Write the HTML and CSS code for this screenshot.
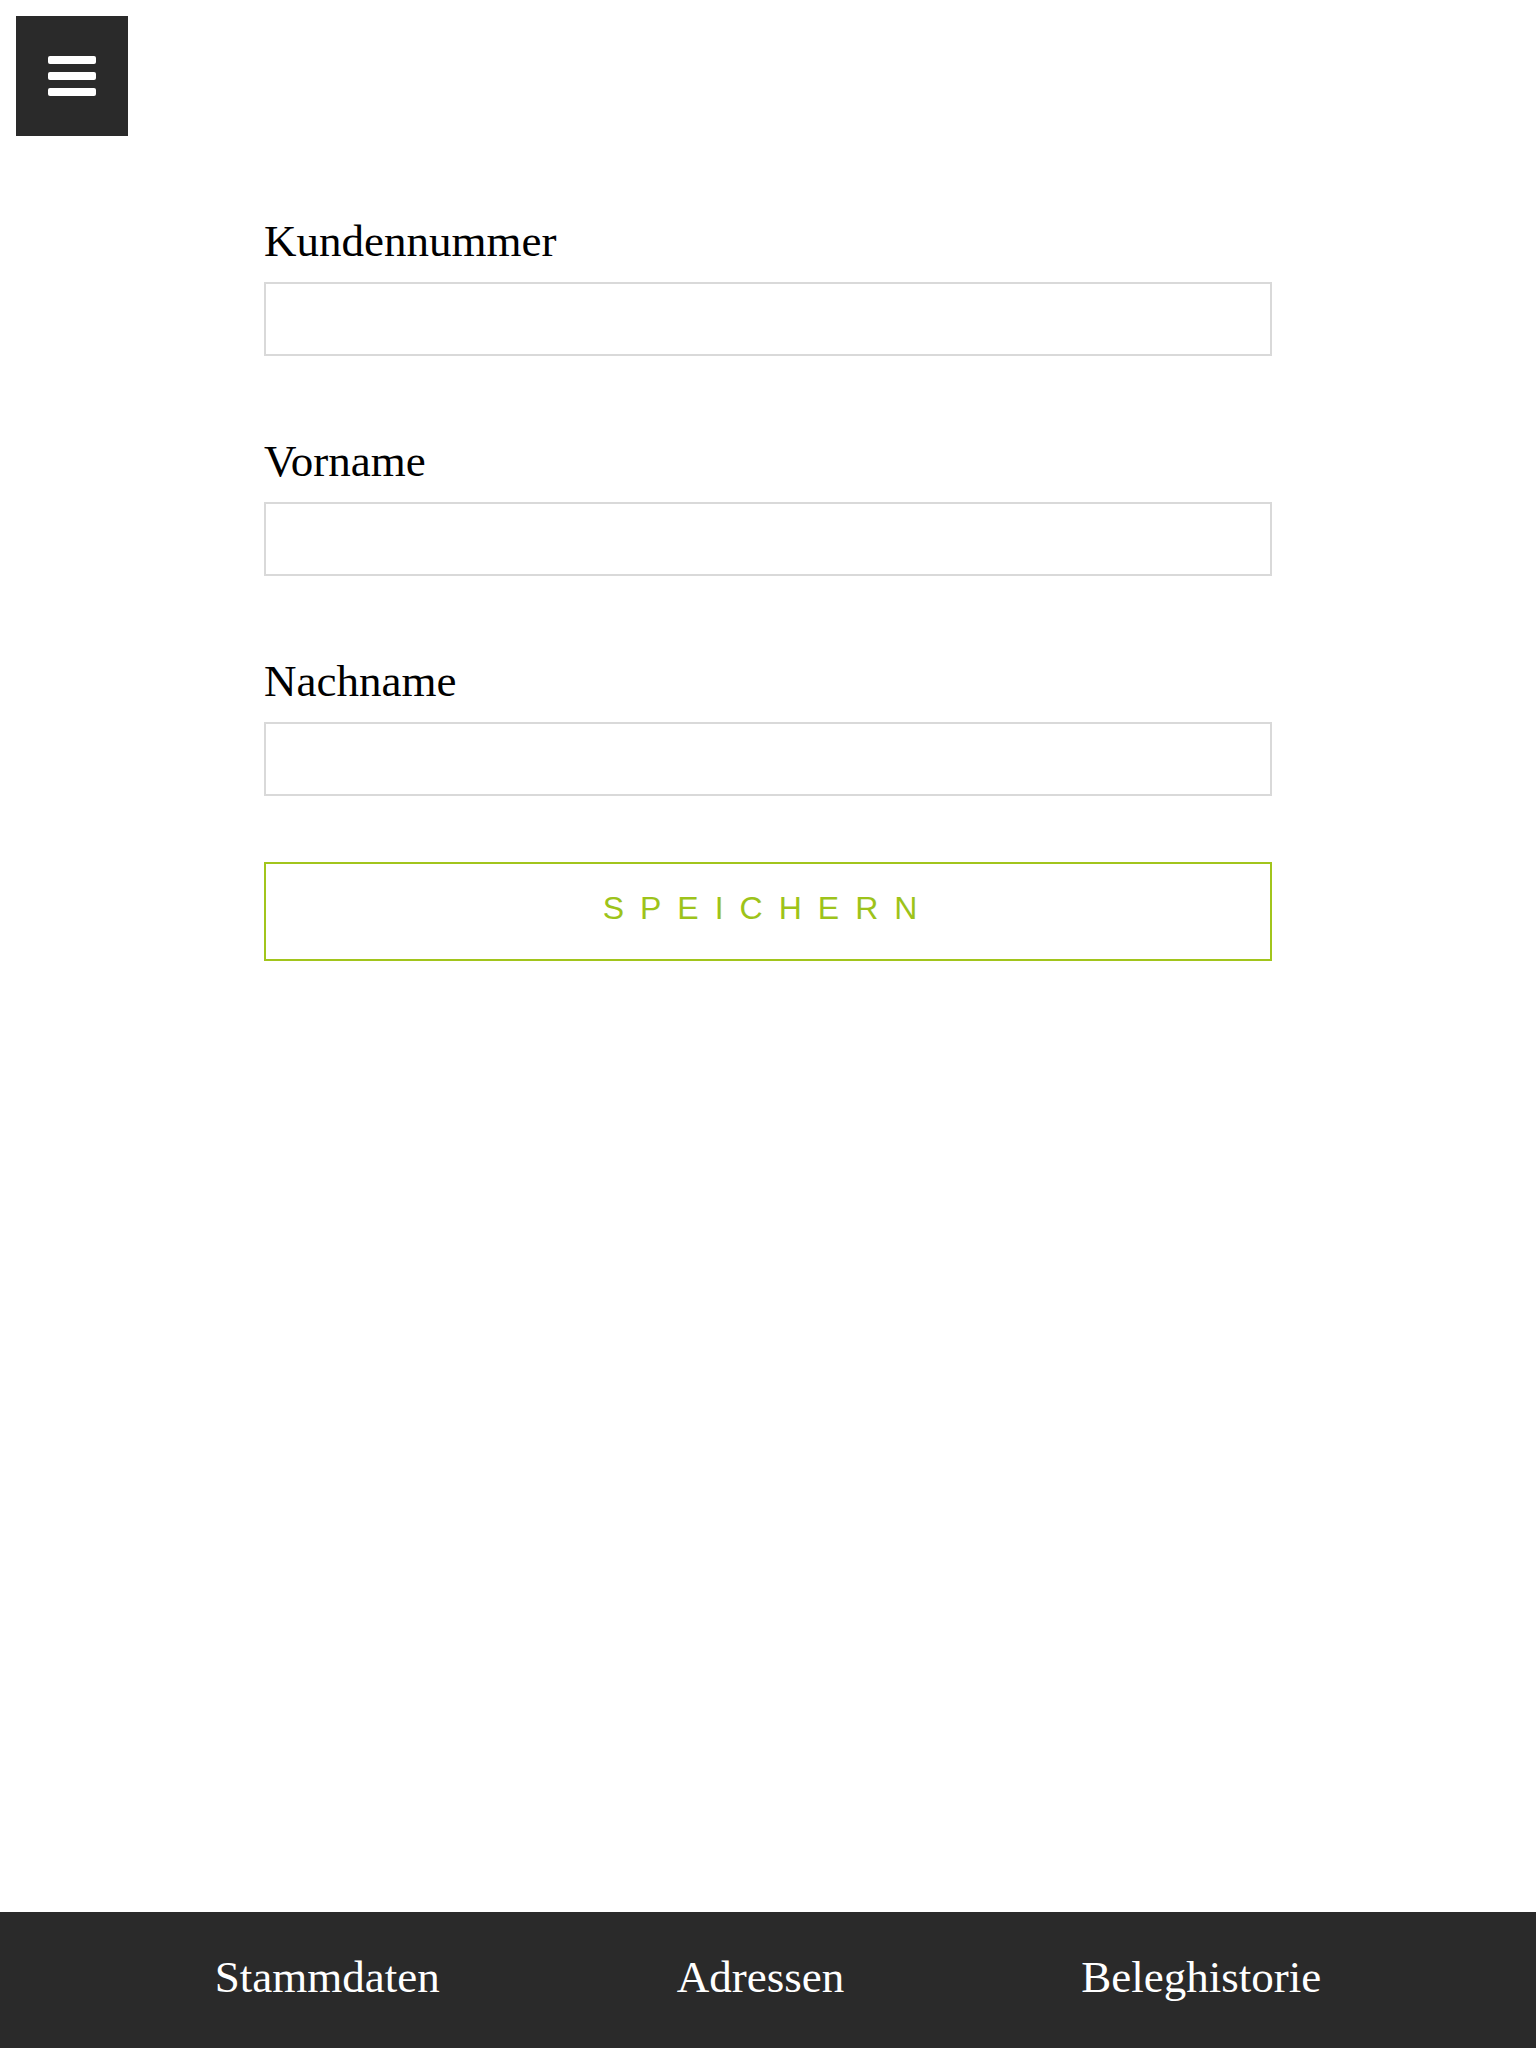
FILE: index.html
```html
<!DOCTYPE html>
<html lang="de">
<head>
<meta charset="utf-8">
<title>Kunde</title>
<link rel="stylesheet" href="styles.css">
</head>
<body>
<div class="page">
  <header class="top">
    <button class="menu-btn" type="button" aria-label="Menü">
      <span class="bar"></span>
      <span class="bar"></span>
      <span class="bar"></span>
    </button>
  </header>
  <main class="content">
    <form class="form">
      <div class="field">
        <label class="label" for="kn">Kundennummer</label>
        <input class="input" id="kn" type="text">
      </div>
      <div class="field">
        <label class="label" for="vn">Vorname</label>
        <input class="input" id="vn" type="text">
      </div>
      <div class="field">
        <label class="label" for="nn">Nachname</label>
        <input class="input" id="nn" type="text">
      </div>
      <button class="save" type="button">SPEICHERN</button>
    </form>
  </main>
  <footer class="tabs">
    <a class="tab">Stammdaten</a>
    <a class="tab">Adressen</a>
    <a class="tab">Beleghistorie</a>
  </footer>
</div>
</body>
</html>
```
FILE: styles.css
```css
html, body {
  margin: 0;
  padding: 0;
  background: #ffffff;
}
body {
  font-family: "Liberation Serif", "Times New Roman", serif;
  color: #000;
}
.page {
  min-height: 2048px;
  display: flex;
  flex-direction: column;
}
.top {
  padding: 16px 0 0 16px;
}
.menu-btn {
  width: 112px;
  height: 120px;
  background: #2a2a2a;
  border: 0;
  padding: 0;
  margin: 0;
  display: flex;
  flex-direction: column;
  align-items: center;
  justify-content: flex-start;
  padding-top: 40px;
  gap: 8px;
  box-sizing: border-box;
}
.bar {
  display: block;
  width: 48px;
  height: 8px;
  background: #fff;
  border-radius: 2px;
}
.content {
  flex: 1;
}
.form {
  width: 1008px;
  margin: 80px auto 0;
  display: flex;
  flex-direction: column;
}
.field {
  display: flex;
  flex-direction: column;
  margin-bottom: 80px;
}
.field:nth-of-type(3) {
  margin-bottom: 66px;
}
.label {
  font-size: 45px;
  line-height: 50px;
  margin-bottom: 16px;
}
.input {
  box-sizing: border-box;
  height: 74px;
  border: 2px solid #d9d9d9;
  background: #fff;
  margin: 0;
  padding: 0 16px;
  font-size: 32px;
  outline: none;
}
.save {
  box-sizing: border-box;
  height: 99px;
  width: 100%;
  border: 2px solid #a2c51c;
  background: #fff;
  color: #9dc31a;
  font-family: "Liberation Sans", Arial, sans-serif;
  font-size: 32px;
  letter-spacing: 16px;
  margin: 0;
  padding: 0 0 7px 0;
}
.tabs {
  height: 136px;
  box-sizing: border-box;
  background: #2a2a2a;
  display: flex;
  justify-content: center;
  gap: 237px;
  padding-top: 40px;
}
.tab {
  color: #fff;
  font-size: 45px;
  line-height: 50px;
  text-decoration: none;
}
```
